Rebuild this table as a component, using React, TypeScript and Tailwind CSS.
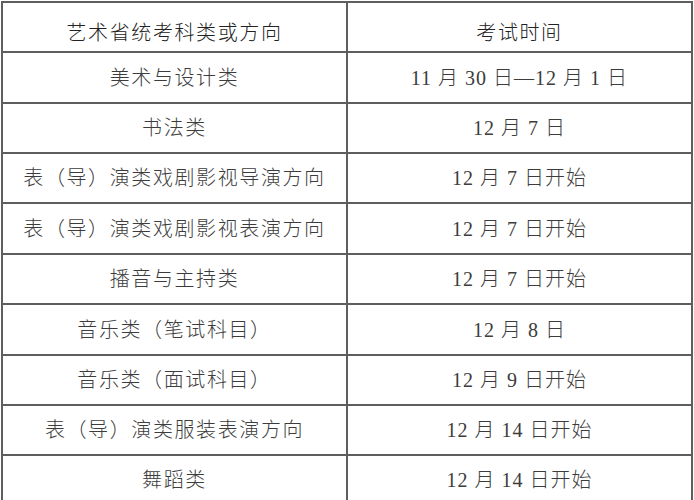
import React from "react";

type Row = { subject: string; time: string; h: string };

const rows: Row[] = [
  { subject: "美术与设计类", time: "11 月 30 日—12 月 1 日", h: "h-[51px]" },
  { subject: "书法类", time: "12 月 7 日", h: "h-[50px]" },
  { subject: "表（导）演类戏剧影视导演方向", time: "12 月 7 日开始", h: "h-[50px]" },
  { subject: "表（导）演类戏剧影视表演方向", time: "12 月 7 日开始", h: "h-[51px]" },
  { subject: "播音与主持类", time: "12 月 7 日开始", h: "h-[50px]" },
  { subject: "音乐类（笔试科目）", time: "12 月 8 日", h: "h-[51px]" },
  { subject: "音乐类（面试科目）", time: "12 月 9 日开始", h: "h-[50px]" },
  { subject: "表（导）演类服装表演方向", time: "12 月 14 日开始", h: "h-[50px]" },
  { subject: "舞蹈类", time: "12 月 14 日开始", h: "h-[50px]" },
];

const cell =
  "flex w-[345px] items-center justify-center border-r-2 border-b-2 border-[#5e5e5e] whitespace-nowrap";

export default function App() {
  return (
    <div className="h-[500px] w-[694px] overflow-hidden bg-white">
      <div
        className="ml-[1px] mt-[1px] w-[692px] border-l-2 border-t-2 border-[#5e5e5e] text-[20px] font-light tracking-[1.6px] text-[#3c3c3c]"
        style={{ fontFamily: '"Liberation Serif", "Noto Sans CJK SC", serif' }}
      >
        <div className="flex h-[50px]">
          <div className={`${cell} pt-[12px] text-[#222]`}>艺术省统考科类或方向</div>
          <div className={`${cell} pt-[12px] text-[#222]`}>考试时间</div>
        </div>
        {rows.map((r, i) => (
          <div key={i} className={`flex ${r.h}`}>
            <div className={cell}>{r.subject}</div>
            <div className={`${cell} tracking-[1px]`}>{r.time}</div>
          </div>
        ))}
      </div>
    </div>
  );
}
